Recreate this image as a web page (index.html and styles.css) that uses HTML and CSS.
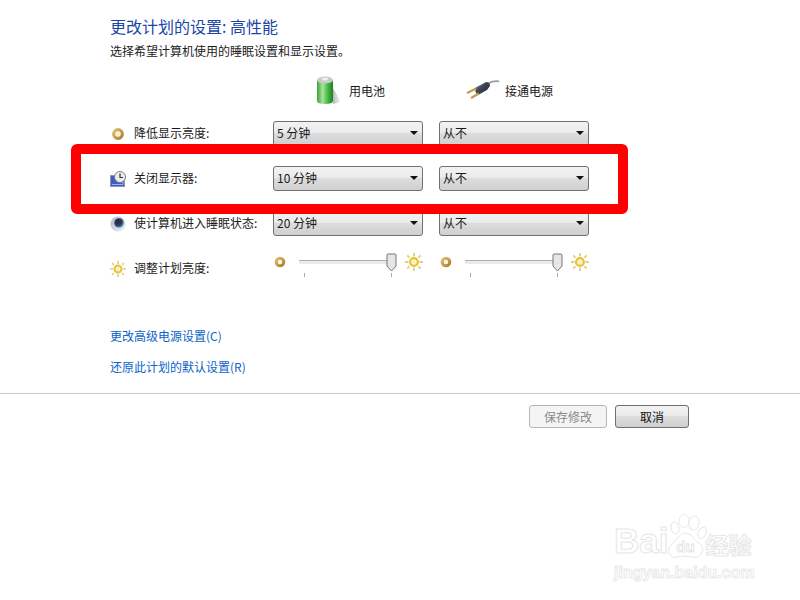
FILE: index.html
```html
<!DOCTYPE html>
<html lang="zh-CN">
<head>
    <meta charset="UTF-8">
    <title>更改计划的设置</title>
    <link rel="stylesheet" href="styles.css">
</head>
<body>
    <svg class="defs" width="0" height="0">
        <defs>
            <linearGradient id="batt" x1="0" x2="1" y1="0" y2="0">
                <stop offset="0" stop-color="#3f9f3a"/>
                <stop offset="0.35" stop-color="#a6e59a"/>
                <stop offset="0.7" stop-color="#3fb53c"/>
                <stop offset="1" stop-color="#1f7f25"/>
            </linearGradient>
            <linearGradient id="shade" x1="0" x2="1" y1="0" y2="0">
                <stop offset="0" stop-color="#999"/>
                <stop offset="1" stop-color="#fff"/>
            </linearGradient>
            <linearGradient id="plug" x1="0" x2="1" y1="0" y2="1">
                <stop offset="0" stop-color="#8b90a0"/>
                <stop offset="0.45" stop-color="#3e4352"/>
                <stop offset="1" stop-color="#20232c"/>
            </linearGradient>
            <linearGradient id="gold" x1="0" x2="1" y1="0" y2="1">
                <stop offset="0" stop-color="#e2bd6e"/>
                <stop offset="1" stop-color="#b07f2e"/>
            </linearGradient>
            <linearGradient id="moon" x1="0" x2="1" y1="0" y2="1">
                <stop offset="0" stop-color="#a9b6c8"/>
                <stop offset="1" stop-color="#f2f5fa"/>
            </linearGradient>
            <radialGradient id="moon-dark" cx="0.4" cy="0.35" r="0.7">
                <stop offset="0" stop-color="#1f2736"/>
                <stop offset="0.6" stop-color="#30405f"/>
                <stop offset="1" stop-color="#86a4dc"/>
            </radialGradient>
        </defs>
    </svg>

    <div class="content">
        <h1 class="title">更改计划的设置: 高性能</h1>
        <p class="subtitle">选择希望计算机使用的睡眠设置和显示设置。</p>

        <div class="head-row">
            <div class="col-head col-1">
                <svg width="26" height="32" viewBox="0 0 26 32">
                    <path d="M17 14 L25 28 L17 30 Z" fill="url(#shade)" opacity="0.7"/>
                    <path d="M1 6 V27 Q1 30 9 30 Q17 30 17 27 V6 Z" fill="url(#batt)"/>
                    <ellipse cx="9" cy="6" rx="8" ry="3.6" fill="#c6ccc8"/>
                    <ellipse cx="9" cy="5" rx="3" ry="1.5" fill="#eef0ee"/>
                </svg>
                <span>用电池</span>
            </div>
            <div class="col-head col-2">
                <svg width="34" height="20" viewBox="0 0 34 20">
                    <path d="M33 1.5 C28 0.5 25 1.5 21 4" fill="none" stroke="#9a9da3" stroke-width="1.8"/>
                    <path d="M9 8 L20 2 Q24 2 24 6 L21 10 L12 15 Q9 13 9 8 Z" fill="url(#plug)"/>
                    <path d="M1 13 L10 8.5" stroke="url(#gold)" stroke-width="2.2"/>
                    <path d="M5 18 L13 13.5" stroke="#c49a4c" stroke-width="2.2"/>
                </svg>
                <span>接通电源</span>
            </div>
        </div>

        <div class="row">
            <svg class="row-icon" width="16" height="16" viewBox="0 0 16 16">
                <circle cx="8" cy="8" r="4.3" fill="none" stroke="url(#gold)" stroke-width="3.2"/>
                <circle cx="8" cy="8" r="2.2" fill="#f6f1e2"/>
            </svg>
            <span class="row-label">降低显示亮度:</span>
            <div class="select">5 分钟</div>
            <div class="select">从不</div>
        </div>

        <div class="row">
            <svg class="row-icon" width="16" height="16" viewBox="0 0 16 16">
                <rect x="0.5" y="4.5" width="14" height="11" fill="#3f5cc4" stroke="#8a98b8"/>
                <path d="M2 13.5 H13 V11" fill="none" stroke="#9cb0e6"/>
                <circle cx="10" cy="6" r="5.5" fill="#ececec" stroke="#7c8088"/>
                <path d="M10 2.5 V6.5 H13" fill="none" stroke="#2c3040" stroke-width="1.2"/>
            </svg>
            <span class="row-label">关闭显示器:</span>
            <div class="select">10 分钟</div>
            <div class="select">从不</div>
        </div>

        <div class="row">
            <svg class="row-icon" width="16" height="16" viewBox="0 0 16 16">
                <circle cx="8" cy="8" r="7.6" fill="url(#moon)"/>
                <circle cx="9" cy="7" r="4.8" fill="url(#moon-dark)"/>
            </svg>
            <span class="row-label">使计算机进入睡眠状态:</span>
            <div class="select">20 分钟</div>
            <div class="select">从不</div>
        </div>

        <div class="row">
            <svg class="row-icon" width="16" height="16" viewBox="0 0 16 16">
                <path d="M8 0 V3 M8 13 V16 M0 8 H3 M13 8 H16 M2 2 L4 4 M12 12 L14 14 M14 2 L12 4 M4 12 L2 14" stroke="#dccf8a" stroke-width="1.6"/>
                <circle cx="8" cy="8" r="3.5" fill="#f8f3cc" stroke="#ecc233" stroke-width="2"/>
            </svg>
            <span class="row-label">调整计划亮度:</span>
            <div class="slider-wrap">
                <svg class="dim" width="12" height="12" viewBox="0 0 12 12">
                    <circle cx="6" cy="6" r="3.8" fill="none" stroke="url(#gold)" stroke-width="3.2"/>
                    <circle cx="6" cy="6" r="1.7" fill="#f6f1e2"/>
                </svg>
                <div class="slider">
                    <div class="track"></div>
                    <div class="tick tick-start"></div>
                    <div class="tick tick-end"></div>
                    <svg class="thumb" width="11" height="19" viewBox="0 0 11 19">
                        <path d="M1 2 Q1 1 2 1 H9 Q10 1 10 2 V13 L5.5 18 L1 13 Z" fill="#e6e6e6" stroke="#777"/>
                    </svg>
                </div>
                <svg class="bright" width="18" height="18" viewBox="0 0 16 16">
                    <path d="M8 0 V3 M8 13 V16 M0 8 H3 M13 8 H16 M2 2 L4 4 M12 12 L14 14 M14 2 L12 4 M4 12 L2 14" stroke="#dccf8a" stroke-width="1.6"/>
                    <circle cx="8" cy="8" r="3.5" fill="#f8f3cc" stroke="#ecc233" stroke-width="2"/>
                </svg>
            </div>
            <div class="slider-wrap">
                <svg class="dim" width="12" height="12" viewBox="0 0 12 12">
                    <circle cx="6" cy="6" r="3.8" fill="none" stroke="url(#gold)" stroke-width="3.2"/>
                    <circle cx="6" cy="6" r="1.7" fill="#f6f1e2"/>
                </svg>
                <div class="slider">
                    <div class="track"></div>
                    <div class="tick tick-start"></div>
                    <div class="tick tick-end"></div>
                    <svg class="thumb" width="11" height="19" viewBox="0 0 11 19">
                        <path d="M1 2 Q1 1 2 1 H9 Q10 1 10 2 V13 L5.5 18 L1 13 Z" fill="#e6e6e6" stroke="#777"/>
                    </svg>
                </div>
                <svg class="bright" width="18" height="18" viewBox="0 0 16 16">
                    <path d="M8 0 V3 M8 13 V16 M0 8 H3 M13 8 H16 M2 2 L4 4 M12 12 L14 14 M14 2 L12 4 M4 12 L2 14" stroke="#dccf8a" stroke-width="1.6"/>
                    <circle cx="8" cy="8" r="3.5" fill="#f8f3cc" stroke="#ecc233" stroke-width="2"/>
                </svg>
            </div>
        </div>

        <div class="links">
            <a class="link">更改高级电源设置(C)</a>
            <a class="link">还原此计划的默认设置(R)</a>
        </div>
    </div>

    <div class="footer">
        <button class="btn btn-disabled">保存修改</button>
        <button class="btn btn-cancel">取消</button>
    </div>

    <!-- Marca roja sobre la fila -->
    <div class="highlight"></div>

    <!-- Marca de agua -->
    <div class="watermark">
        <div class="wm-top">
            <span class="wm-logo">Bai</span>
            <svg class="paw" width="40" height="46" viewBox="0 0 40 46">
                <g fill="#fff" stroke="#e8e8e8" stroke-width="1">
                    <ellipse cx="8" cy="14" rx="4" ry="6" transform="rotate(-15 8 14)"/>
                    <ellipse cx="17" cy="7" rx="5" ry="6.5"/>
                    <ellipse cx="27" cy="9" rx="5" ry="7" transform="rotate(10 27 9)"/>
                    <ellipse cx="35" cy="19" rx="4" ry="6" transform="rotate(25 35 19)"/>
                    <path d="M18 19 C24 19 27 26 33 30 C39 35 34 45 26 43 C21 42 15 42 10 43 C2 45 -1 36 4 31 C10 27 12 19 18 19 Z"/>
                </g>
                <text x="18.5" y="38" text-anchor="middle" class="wm-du">du</text>
            </svg>
            <span class="wm-cn">经验</span>
        </div>
        <div class="wm-url">jingyan.baidu.com</div>
    </div>
</body>
</html>
```

FILE: styles.css
```css
body {
    margin: 0;
    background-color: #fff;
    font-family: "Noto Sans CJK SC", "Liberation Sans", sans-serif;
    font-size: 12px;
    color: #1a1a1a;
    overflow: hidden;
    height: 600px;
    position: relative;
}

.defs {
    position: absolute;
}

.content {
    padding: 16px 0 0 110px;
}

.title {
    margin: 0;
    font-size: 16px;
    font-weight: 400;
    line-height: 20px;
    color: #1a46a8;
}

.subtitle {
    margin: 7px 0 0 0;
    line-height: 16px;
}

/* Cabecera de columnas */
.head-row {
    display: flex;
    height: 62px;
    padding-left: 163px;
}

.col-head {
    display: flex;
    align-items: center;
    box-sizing: border-box;
    width: 150px;
}

.col-1 {
    padding-left: 43px;
    margin-right: 16px;
}

.col-2 {
    padding-left: 27px;
}

.col-1 span {
    margin-left: 7px;
}

.col-2 span {
    margin-left: 5px;
}

/* Filas de ajustes */
.row {
    display: flex;
    align-items: center;
    height: 25px;
    margin-bottom: 20px;
}

.row-icon {
    flex: none;
    margin-right: 8px;
}

.row-label {
    width: 139px;
    flex: none;
    line-height: 16px;
    margin-top: -1px;
}

.select {
    box-sizing: border-box;
    flex: none;
    width: 150px;
    height: 25px;
    line-height: 21px;
    padding-left: 3px;
    border: 1px solid #707070;
    border-radius: 3px;
    background: linear-gradient(#f2f2f2 0%, #ebebeb 45%, #dddddd 50%, #cfcfcf 100%);
    position: relative;
}

.select + .select,
.slider-wrap + .slider-wrap {
    margin-left: 16px;
}

.select::after {
    content: "";
    position: absolute;
    right: 4px;
    top: 9px;
    border-left: 4px solid transparent;
    border-right: 4px solid transparent;
    border-top: 4px solid #111;
}

/* Deslizadores */
.slider-wrap {
    display: flex;
    align-items: flex-start;
    flex: none;
    width: 150px;
    height: 30px;
    margin-top: -5px;
}

.dim {
    margin: 5px 0 0 1px;
}

.bright {
    margin: 2px 0 0 10px;
}

.slider {
    position: relative;
    width: 97px;
    height: 26px;
    margin-left: 13px;
}

.track {
    height: 3px;
    margin-top: 9px;
    background-color: #e8ecec;
    border-top: 1px solid #b0b0b0;
}

.tick {
    position: absolute;
    top: 22px;
    width: 1px;
    height: 4px;
    background-color: #aaa;
}

.tick-start {
    left: 5px;
}

.tick-end {
    left: 92px;
}

.thumb {
    position: absolute;
    top: 2px;
    left: 87px;
}

.links {
    display: flex;
    flex-direction: column;
    gap: 13px;
    margin-top: 46px;
}

.link {
    line-height: 18px;
    color: #0a64c8;
}

.footer {
    position: absolute;
    top: 393px;
    left: 0;
    right: 0;
    box-sizing: border-box;
    height: 40px;
    border-top: 1px solid #ccc;
    display: flex;
    justify-content: flex-end;
    gap: 8px;
    padding: 11px 111px 0 0;
}

.btn {
    box-sizing: border-box;
    height: 23px;
    padding: 0;
    font-family: inherit;
    font-size: 12px;
    border-radius: 3px;
}

.btn-disabled {
    width: 78px;
    border: 1px solid #b5b5b5;
    background-color: #f4f4f4;
    color: #8a8a8a;
}

.btn-cancel {
    width: 74px;
    border: 1px solid #707070;
    background: linear-gradient(#f2f2f2 0%, #ebebeb 45%, #dddddd 50%, #cfcfcf 100%);
    color: #111;
}

.highlight {
    position: absolute;
    left: 71px;
    top: 144px;
    width: 557px;
    height: 70px;
    box-sizing: border-box;
    border: 10px solid #ff0000;
    border-radius: 6px;
}

/* Marca de agua */
.watermark {
    position: absolute;
    left: 614px;
    top: 514px;
    width: 150px;
    color: #fff;
}

.wm-top {
    display: flex;
    align-items: flex-end;
    height: 46px;
}

.wm-logo {
    font-family: "Liberation Sans", sans-serif;
    font-size: 35px;
    font-weight: 700;
    line-height: 38px;
    -webkit-text-stroke: 1px #e6e6e6;
}

.paw {
    flex: none;
    margin-left: -1px;
}

.wm-du {
    font-family: "Liberation Sans", sans-serif;
    font-size: 15px;
    font-weight: 700;
    fill: #fff;
    stroke: #e2e2e2;
    stroke-width: 0.8;
}

.wm-cn {
    margin-left: -2px;
    font-size: 23px;
    font-weight: 700;
    line-height: 32px;
    -webkit-text-stroke: 1px #e6e6e6;
}

.wm-url {
    margin-top: 3px;
    font-family: "Liberation Sans", sans-serif;
    font-size: 16px;
    font-weight: 700;
    line-height: 20px;
    white-space: nowrap;
    -webkit-text-stroke: 1px #eaeaea;
}
```
